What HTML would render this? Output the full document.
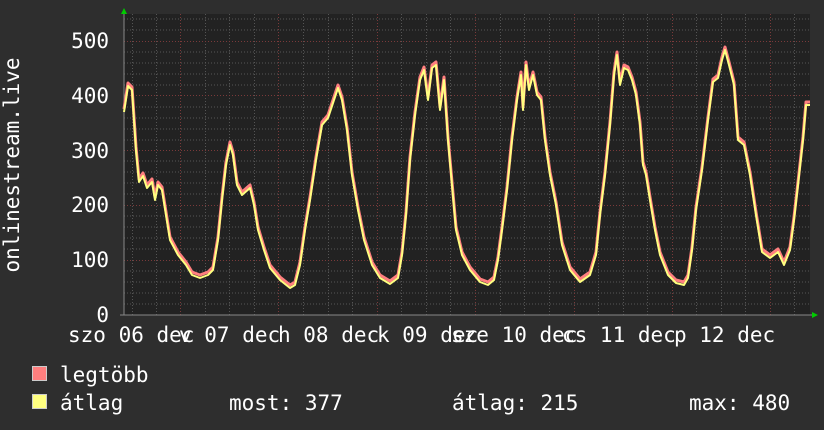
<!DOCTYPE html>
<html><head><meta charset="utf-8"><style>
body{margin:0;background:#2e2e2e;width:824px;height:430px;overflow:hidden}
svg{display:block}
text{font-family:"DejaVu Sans Mono","Liberation Mono",monospace;fill:#fff}
</style></head><body>
<svg width="824" height="430" viewBox="0 0 824 430">
<rect width="824" height="430" fill="#2e2e2e"/>
<rect x="124" y="14" width="686" height="301" fill="#222"/>
<g stroke="#555" stroke-width="1" stroke-dasharray="1,2">
<path d="M124 304H810M124 293H810M124 282H810M124 271H810M124 249H810M124 238H810M124 227H810M124 216H810M124 194H810M124 183H810M124 172H810M124 161H810M124 140H810M124 129H810M124 118H810M124 107H810M124 85H810M124 74H810M124 63H810M124 52H810M124 30H810M124 19H810"/>
<path d="M132.5 14V315M156.5 14V315M205.5 14V315M229.5 14V315M254.5 14V315M303.5 14V315M328.5 14V315M352.5 14V315M401.5 14V315M426.5 14V315M450.5 14V315M500.5 14V315M524.5 14V315M549.5 14V315M598.5 14V315M623.5 14V315M647.5 14V315M696.5 14V315M721.5 14V315M745.5 14V315M794.5 14V315"/>
</g>
<g stroke="#7a3a3a" stroke-width="1" stroke-dasharray="1,2">
<path d="M124 260.5H810M124 205.5H810M124 150.5H810M124 95.5H810M124 41.5H810"/>
<path d="M180.5 14V315M278.5 14V315M377.5 14V315M475.5 14V315M574.5 14V315M672.5 14V315M770.5 14V315"/>
</g>
<g stroke="#888" stroke-width="1"><path d="M124 10V315M120 315H812"/></g>
<path d="M121 14L124 8L127 14Z" fill="#0c0"/>
<path d="M812 312L818 315L812 318Z" fill="#0c0"/>
<g fill="none" stroke-linejoin="round">
<polyline stroke="#ff7f7f" stroke-width="3" transform="translate(0,-3)" points="124,112 128,86 132,90 136,150 139,182 143,176 147,188 152,182 155,200 158,185 162,190 166,215 170,240 178,255 186,265 192,275 200,278 208,275 213,270 218,240 222,200 226,165 230,145 233,155 237,185 242,195 250,188 254,205 258,230 264,250 270,268 280,280 290,288 295,285 300,265 305,230 310,200 316,160 322,125 328,118 334,100 338,88 342,100 347,130 352,175 358,210 364,240 372,265 380,278 390,284 398,278 402,255 406,215 410,160 415,115 420,80 424,70 428,100 432,68 436,65 440,110 444,80 448,140 452,185 456,230 462,255 470,270 480,282 488,285 494,280 498,260 502,230 507,190 512,140 517,100 521,75 523,110 526,65 529,90 533,75 537,95 541,100 545,140 550,175 556,205 562,245 570,270 580,282 590,275 596,255 600,215 605,175 610,125 614,75 617,55 620,85 624,68 628,70 632,80 636,95 640,125 643,165 646,175 650,200 655,230 660,255 668,275 676,283 684,285 688,278 692,250 696,210 702,170 708,120 713,82 718,78 722,60 725,50 729,65 734,85 738,140 744,145 750,175 756,215 762,252 770,258 778,252 784,265 790,250 794,220 798,185 803,140 806,105 810,105"/>
<polyline stroke="#ffff80" stroke-width="2" points="124,112 128,86 132,90 136,150 139,182 143,176 147,188 152,182 155,200 158,185 162,190 166,215 170,240 178,255 186,265 192,275 200,278 208,275 213,270 218,240 222,200 226,165 230,145 233,155 237,185 242,195 250,188 254,205 258,230 264,250 270,268 280,280 290,288 295,285 300,265 305,230 310,200 316,160 322,125 328,118 334,100 338,88 342,100 347,130 352,175 358,210 364,240 372,265 380,278 390,284 398,278 402,255 406,215 410,160 415,115 420,80 424,70 428,100 432,68 436,65 440,110 444,80 448,140 452,185 456,230 462,255 470,270 480,282 488,285 494,280 498,260 502,230 507,190 512,140 517,100 521,75 523,110 526,65 529,90 533,75 537,95 541,100 545,140 550,175 556,205 562,245 570,270 580,282 590,275 596,255 600,215 605,175 610,125 614,75 617,55 620,85 624,68 628,70 632,80 636,95 640,125 643,165 646,175 650,200 655,230 660,255 668,275 676,283 684,285 688,278 692,250 696,210 702,170 708,120 713,82 718,78 722,60 725,50 729,65 734,85 738,140 744,145 750,175 756,215 762,252 770,258 778,252 784,265 790,250 794,220 798,185 803,140 806,105 810,105"/>
</g>
<g font-size="21" text-anchor="end">
<text x="109" y="322">0</text><text x="109" y="267">100</text><text x="109" y="212">200</text><text x="109" y="158">300</text><text x="109" y="103">400</text><text x="109" y="48">500</text>
</g>
<text transform="translate(19,165) rotate(-90)" font-size="21" text-anchor="middle">onlinestream.live</text>
<g font-size="21">
<text x="68" y="342">szo 06 dec</text><text x="179" y="342">v 07 dec</text><text x="278" y="342">h 08 dec</text><text x="377" y="342">k 09 dec</text><text x="451" y="342">sze 10 dec</text><text x="562" y="342">cs 11 dec</text><text x="674" y="342">p 12 dec</text>
</g>
<rect x="32.5" y="366.5" width="14" height="14" fill="#ff7f7f" stroke="#ccc"/>
<rect x="32.5" y="394.5" width="14" height="14" fill="#ffff80" stroke="#ccc"/>
<g font-size="21">
<text x="60" y="382">legtöbb</text><text x="60" y="410">átlag</text>
<text x="229" y="410">most: 377</text><text x="452" y="410">átlag: 215</text><text x="689" y="410">max: 480</text>
</g>
</svg>
</body></html>
